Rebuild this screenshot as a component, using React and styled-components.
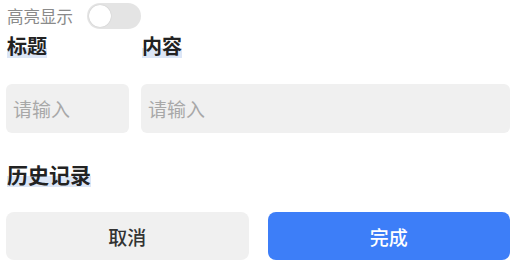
import React, { useState } from "react";
import styled, { createGlobalStyle } from "styled-components";

const GlobalStyle = createGlobalStyle`
  body {
    margin: 0;
    background: #ffffff;
    font-family: "Noto Sans CJK SC", "Noto Sans", sans-serif;
  }
`;

const Page = styled.div`
  width: 514px;
  box-sizing: border-box;
  padding: 0 4px 0 6px;
`;

const ToggleRow = styled.div`
  display: flex;
  align-items: center;
  gap: 14px;
  height: 32px;
  padding-left: 1px;
`;

const ToggleLabel = styled.span`
  font-size: 16.5px;
  color: #8a8a8a;
`;

const Track = styled.button`
  position: relative;
  width: 54px;
  height: 26px;
  border: none;
  padding: 0;
  border-radius: 13px;
  background: ${(p) => (p.on ? "#3d7ef8" : "#e4e4e4")};
  cursor: pointer;
`;

const Knob = styled.span`
  position: absolute;
  top: 2px;
  left: ${(p) => (p.on ? "30px" : "2px")};
  width: 22px;
  height: 22px;
  border-radius: 50%;
  background: #ffffff;
  box-shadow: 0 0 1px rgba(0, 0, 0, 0.25);
`;

const Columns = styled.div`
  display: grid;
  grid-template-columns: 123px 1fr;
  column-gap: 12px;
`;

const Heading = styled.h3`
  margin: 0;
  font-size: ${(p) => (p.large ? "21px" : "20px")};
  line-height: 28px;
  font-weight: 700;
  color: #222;
  padding-left: 1px;
  span {
    background: linear-gradient(transparent 58%, #dce6f6 58%, #dce6f6 92%, transparent 92%);
  }
`;

const Field = styled.input`
  height: 49px;
  box-sizing: border-box;
  border: none;
  border-radius: 6px;
  background: #f0f0f0;
  padding: 0 7px;
  font-family: inherit;
  font-size: 19px;
  color: #333;
  outline: none;
  min-width: 0;
  &::placeholder {
    color: #a8a8a8;
  }
`;

const InputRow = styled(Columns)`
  margin-top: 24px;
`;

const History = styled.div`
  margin-top: 27px;
`;

const Actions = styled.div`
  display: grid;
  grid-template-columns: 1fr 1fr;
  column-gap: 19px;
  margin-top: 24px;
`;

const ActionButton = styled.button`
  height: 48px;
  border: none;
  border-radius: 8px;
  font-family: inherit;
  font-size: 19px;
  font-weight: 500;
  background: ${(p) => (p.primary ? "#3d7ef8" : "#f0f0f0")};
  color: ${(p) => (p.primary ? "#ffffff" : "#333333")};
  cursor: pointer;
`;

export default function App() {
  const [highlight, setHighlight] = useState(false);
  return (
    <>
      <GlobalStyle />
      <Page>
        <ToggleRow>
          <ToggleLabel>高亮显示</ToggleLabel>
          <Track on={highlight} onClick={() => setHighlight(!highlight)}>
            <Knob on={highlight} />
          </Track>
        </ToggleRow>
        <Columns>
          <Heading>
            <span>标题</span>
          </Heading>
          <Heading>
            <span>内容</span>
          </Heading>
        </Columns>
        <InputRow>
          <Field placeholder="请输入" />
          <Field placeholder="请输入" />
        </InputRow>
        <History>
          <Heading large>
            <span>历史记录</span>
          </Heading>
        </History>
        <Actions>
          <ActionButton>取消</ActionButton>
          <ActionButton primary>完成</ActionButton>
        </Actions>
      </Page>
    </>
  );
}
